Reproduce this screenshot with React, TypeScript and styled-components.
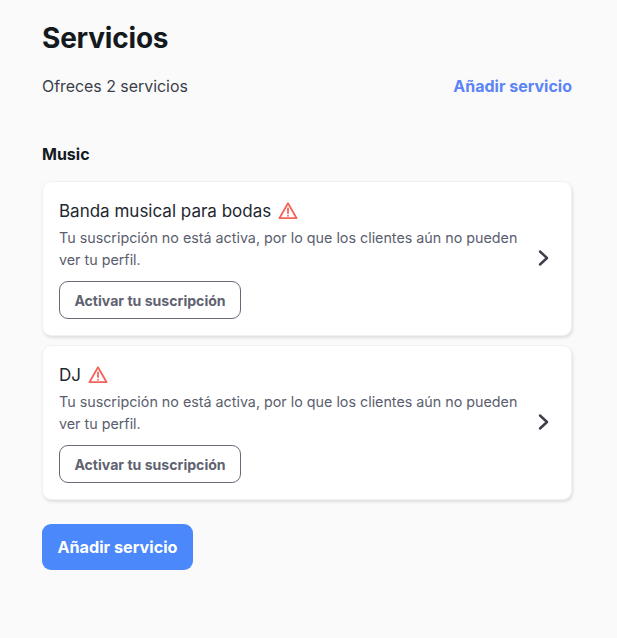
import React from "react";
import styled, { createGlobalStyle } from "styled-components";

const Global = createGlobalStyle`
  html, body { margin: 0; padding: 0; background: #fafafa; }
  body { font-family: "Inter", "Liberation Sans", sans-serif; }
`;
const Page = styled.main`
  width: 617px; height: 638px; box-sizing: border-box; padding: 20px 45px 0 42px; overflow: hidden;
`;
const Title = styled.h1`
  margin: 0; font-size: 28px; line-height: 36px; font-weight: 700; color: #14191e; letter-spacing: -0.2px;
`;
const Summary = styled.div`
  display: flex; justify-content: space-between; align-items: center; margin-top: 12px; height: 36px;
`;
const Count = styled.span`
  font-size: 15.9px; color: #3a3f4a;
`;
const AddLink = styled.a`
  font-size: 16px; font-weight: 700; color: #5b84f7;
`;
const Category = styled.h2`
  margin: 38px 0 0; font-size: 16px; line-height: 24px; font-weight: 700; color: #14191e;
`;
const Cards = styled.div`
  display: flex; flex-direction: column; gap: 9px; margin-top: 15px;
`;
const Card = styled.article`
  display: flex; align-items: center; justify-content: space-between; box-sizing: border-box;
  background: #fff; border: 1px solid #f1f1f3; border-radius: 9px; padding: 16px 21px 16px 16px;
  height: 155px; box-shadow: 1px 2px 3px rgba(30, 35, 50, 0.12);
`;
const CardBody = styled.div`
  display: flex; flex-direction: column; align-items: flex-start; width: 464px;
`;
const NameRow = styled.div`
  display: flex; align-items: center; gap: 7px; height: 25px;
`;
const Name = styled.span`
  font-size: 17px; color: #23272f;
`;
const Notice = styled.p`
  margin: 4px 0 0; font-size: 14.3px; line-height: 22px; color: #5a5e6e;
`;
const Outline = styled.button`
  margin-top: 10px; height: 38px; width: 182px; background: #fff; border: 1px solid #666a79; border-radius: 9px;
  font: 700 14.1px "Inter", sans-serif; color: #5f6371; padding: 0;
`;
const Primary = styled.button`
  display: block; margin-top: 24px; width: 151px; height: 46px; border: 0; border-radius: 9px; background: #4a88fc;
  font: 700 16.2px "Inter", sans-serif; color: #fff; padding: 0;
`;
const ChevronIcon = styled.svg`
  margin-top: -1px;
`;

const Warn = () => (
  <svg width="20" height="20" viewBox="0 0 20 20" fill="none" stroke="#f4645a" strokeWidth="1.8" strokeLinejoin="round" strokeLinecap="round">
    <path d="M10 2.2 18.6 17.2H1.4Z" />
    <path d="M10 7.5V12" />
    <path d="M10 14.6v.2" />
  </svg>
);
const Chevron = () => (
  <ChevronIcon width="12" height="16" viewBox="0 0 12 16" fill="none" stroke="#3a3e48" strokeWidth="2.4" strokeLinecap="round" strokeLinejoin="round">
    <path d="M2 1.5 9 8 2 14.5" />
  </ChevronIcon>
);

const NOTICE = "Tu suscripción no está activa, por lo que los clientes aún no pueden ver tu perfil.";

const ServiceCard = ({ name }: { name: string }) => (
  <Card>
    <CardBody>
      <NameRow><Name>{name}</Name><Warn /></NameRow>
      <Notice>{NOTICE}</Notice>
      <Outline>Activar tu suscripción</Outline>
    </CardBody>
    <Chevron />
  </Card>
);

export default function App() {
  return (
    <Page>
      <Global />
      <Title>Servicios</Title>
      <Summary><Count>Ofreces 2 servicios</Count><AddLink>Añadir servicio</AddLink></Summary>
      <Category>Music</Category>
      <Cards>
        <ServiceCard name="Banda musical para bodas" />
        <ServiceCard name="DJ" />
      </Cards>
      <Primary>Añadir servicio</Primary>
    </Page>
  );
}
